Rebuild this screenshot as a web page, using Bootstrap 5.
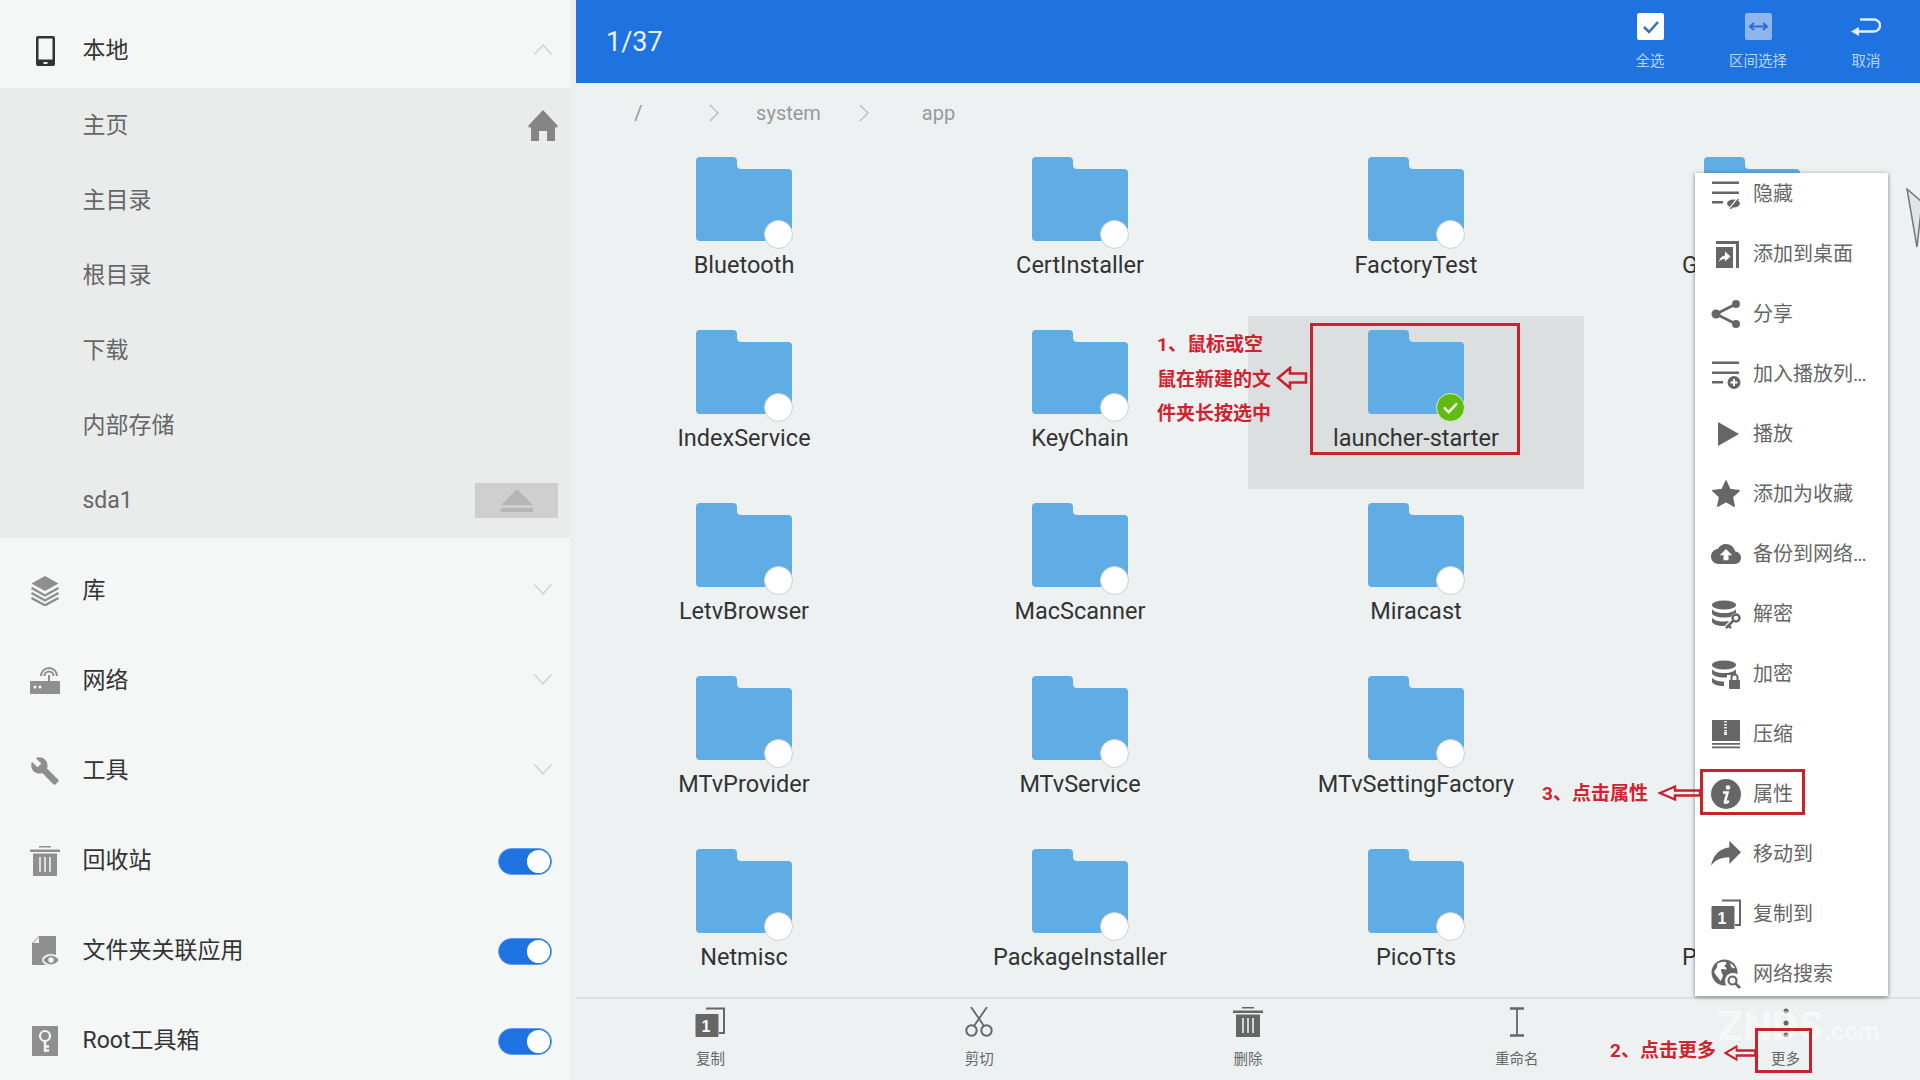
<!DOCTYPE html>
<html lang="zh">
<head>
<meta charset="utf-8">
<title>文件管理</title>
<link href="https://cdn.jsdelivr.net/npm/bootstrap@5.3.0/dist/css/bootstrap.min.css" rel="stylesheet">
<style>
html,body{margin:0;height:100%;overflow:hidden;}
body{font-family:Roboto,"Noto Sans CJK SC",sans-serif;background:#eef1f1;color:#333;}
.shell{width:1920px;height:1080px;overflow:hidden;}
.side{width:576px;flex:0 0 576px;background:#f5f7f7;border-right:6px solid #edf0f0;overflow:hidden;}
.side-row{flex:none;height:90px;padding:0 18px 0 30px;font-size:23px;color:#333;}
.side-row.first{height:88px;padding-top:14px;}
.side-row svg.ic{width:30px;height:30px;margin-right:22.500px;flex:none;color:#8f8f8f;}
.side-row.first svg.ic{color:#333;}
.side-gap{flex:none;height:8px;}
.sub-group{flex:none;background:#eaecec;width:570px;}
.sub-row{height:75px;padding:2px 12px 0 82.500px;font-size:23px;color:#666;}
.home-ic{width:30px;height:31px;color:#858585;margin-top:-2px;}
.eject-btn{width:83px;height:35px;background:#cfcfcf;margin-top:-2px;}
.chev{width:18px;height:11px;color:#cfd2d2;margin-bottom:4px;}
.form-switch .form-check-input.sw-toggle{width:54px;height:27px;margin:0;float:none;background-color:#1f73e0;border:1px solid #5f9ff0;
 background-image:url("data:image/svg+xml,%3csvg xmlns='http://www.w3.org/2000/svg' viewBox='-4 -4 8 8'%3e%3ccircle r='3.7' fill='%23fff'/%3e%3c/svg%3e");}
.main-pane{min-width:0;}
.top-bar{flex:none;height:83px;background:#1f73e0;color:#fff;}
.count{font-size:27px;padding:2px 0 0 30px;color:#e9f1fc;}
.top-act{width:108px;padding-top:13px;font-size:14.500px;line-height:20px;color:#b9d4f5;}
.top-act svg{height:27px;display:block;margin-bottom:12px;}
.crumbs{flex:none;height:60px;padding:0 0 1px 25px;font-size:20px;color:#999;}
.crumb-cell{width:75px;text-align:center;}
.crumb-cell svg{width:10px;height:18px;color:#bbb;display:block;margin:0 auto;}
.grid-area{overflow:hidden;min-height:0;}
.tile{height:173px;padding-top:14px;text-align:center;font-size:23.500px;line-height:28px;color:#333;}
.tile.picked{background:#dcdfdf;}
.folder{position:relative;width:96px;height:84px;margin:0 auto 10px;}
.folder>svg{display:block;width:96px;height:84px;color:#60ace5;}
.pick{position:absolute;left:68px;top:63px;width:29px;height:29px;border-radius:50%;background:#fff;border:1px solid #cfcfcf;}
.pick.on{background:#62bb14;border:1.500px solid #d6f0c0;}
.pick svg{display:block;width:100%;height:100%;}
.tile-name{white-space:nowrap;}
.tile-name.cut{text-align:left;padding-left:98px;}
.bottom-bar{flex:none;height:83px;border-top:2px solid #dde0e0;background:#eef1f1;}
.bot-act{padding-top:8px;font-size:14.500px;line-height:20px;color:#666;}
.bot-act svg{display:block;width:30px;height:30px;margin-bottom:13px;}
.ic-num{font-family:"Liberation Sans",sans-serif;font-size:16px;font-weight:700;text-anchor:middle;fill:#fff;}
.pop-menu{position:absolute;left:1695px;top:173px;width:193px;height:823px;background:#fff;overflow:hidden;box-shadow:0 1px 4px rgba(0,0,0,.5);font-size:20px;color:#666;}
.pop-inner{margin-top:-9.500px;}
.pop-item{height:60px;padding-left:16px;gap:12px;white-space:nowrap;}
.pop-item svg{width:30px;height:30px;flex:none;}
.tight{letter-spacing:-1px;}
.note{position:absolute;color:#cf2430;font-weight:700;font-size:19px;white-space:nowrap;line-height:1.2;}
.note-3l{left:1157px;top:328px;line-height:34.500px;}
.red-box{position:absolute;border:3px solid #c8232c;}
.red-arrow{position:absolute;color:#c8232c;}
.plane{position:absolute;left:1906px;top:188px;width:14px;height:60px;}
.wmark{position:absolute;left:1718px;top:1006px;color:rgba(255,255,255,.5);font-size:41px;font-weight:700;line-height:40px;white-space:nowrap;}
.wmark small{font-size:25px;}
.defs{position:absolute;width:0;height:0;}
</style>
</head>
<body>
<svg class="defs" aria-hidden="true">
 <symbol id="i-phone" viewBox="0 0 30 30"><path fill="currentColor" fill-rule="evenodd" d="M8 0h15a2 2 0 0 1 2 2v26a2 2 0 0 1-2 2H8a2 2 0 0 1-2-2V2a2 2 0 0 1 2-2Zm.5 2.500v21h14v-21Zm5 23.500v2h4v-2Z"/></symbol>
 <symbol id="i-layers" viewBox="0 0 30 30"><path fill="currentColor" d="M15 0 28.500 7.500 15 15 1.500 7.500Z"/><path fill="none" stroke="currentColor" stroke-width="2.400" d="M1.500 12 15 19.500 28.500 12M1.500 17 15 24.500 28.500 17M1.500 22 15 29.300 28.500 22"/></symbol>
 <symbol id="i-router" viewBox="0 0 30 30"><path fill="currentColor" d="M1 15h28a1 1 0 0 1 1 1v11a1 1 0 0 1-1 1H1a1 1 0 0 1-1-1V16a1 1 0 0 1 1-1Z"/><circle cx="5" cy="21" r="1.500" fill="#f5f7f7"/><circle cx="10" cy="21" r="1.500" fill="#f5f7f7"/><path fill="none" stroke="currentColor" stroke-width="2" d="M19 15V9M14.500 10a4.500 4.500 0 0 1 9 0M11 10a8 8 0 0 1 16 0"/></symbol>
 <symbol id="i-wrench" viewBox="0 0 24 24"><path fill="currentColor" d="M22.700 19l-9.100-9.100c.9-2.300.4-5-1.500-6.900-2-2-5-2.400-7.400-1.300L9 6 6 9 1.600 4.700C.4 7.100.9 10.100 2.900 12.100c1.900 1.900 4.600 2.400 6.900 1.500l9.100 9.100c.4.400 1 .4 1.400 0l2.300-2.300c.5-.4.5-1.100.1-1.400z"/></symbol>
 <symbol id="i-trash" viewBox="0 0 30 30"><path fill="currentColor" d="M9 0h12v1.500H9ZM0 3.500h30v2.500H0ZM3 7.500h24V29a1 1 0 0 1-1 1H4a1 1 0 0 1-1-1Z"/><path stroke="#f0f2f2" stroke-width="1.600" d="M10 11v15M15 11v15M20 11v15"/></symbol>
 <symbol id="i-fileeye" viewBox="0 0 30 30"><path fill="currentColor" d="M9 0h16a1 1 0 0 1 1 1v27a1 1 0 0 1-1 1H3a1 1 0 0 1-1-1V7Z"/><path fill="#f5f7f7" d="M9 1v6H3Z"/><ellipse cx="21" cy="24" rx="9" ry="6" fill="#f5f7f7"/><path fill="currentColor" fill-rule="evenodd" d="M21 19.500c3.500 0 6.300 2.200 7.500 4.500-1.200 2.300-4 4.500-7.500 4.500s-6.300-2.200-7.500-4.500c1.200-2.300 4-4.500 7.500-4.500Zm0 1.800a2.700 2.700 0 1 0 0 5.400 2.700 2.700 0 0 0 0-5.400Z"/></symbol>
 <symbol id="i-keybox" viewBox="0 0 30 30"><rect x="2" y="0" width="26" height="30" rx="1" fill="currentColor"/><circle cx="15" cy="10" r="5" fill="none" stroke="#f5f7f7" stroke-width="2.200"/><path fill="none" stroke="#f5f7f7" stroke-width="2.400" d="M15 15v11M15 20.500h4M15 24.500h4"/></symbol>
 <symbol id="i-folder" viewBox="0 0 96 84"><path fill="currentColor" d="M4 0H37a4 4 0 0 1 4 4v4a4 4 0 0 0 4 4H92a4 4 0 0 1 4 4V80a4 4 0 0 1-4 4H4a4 4 0 0 1-4-4V4a4 4 0 0 1 4-4Z"/></symbol>
 <symbol id="i-hide" viewBox="0 0 30 30"><path fill="currentColor" d="M1 2.500h27V5H1ZM1 12.500h27V15H1ZM1 22h11v2.500H1Z"/><ellipse cx="22.500" cy="24.500" rx="6.500" ry="4" fill="currentColor"/><path stroke="#fff" stroke-width="1.400" d="M18 30l8-10"/><path stroke="currentColor" stroke-width="1.300" d="M19 30.500l8.500-10.500"/></symbol>
 <symbol id="i-desk" viewBox="0 0 30 30"><path fill="currentColor" d="M5 2h23v27h-3V5H5ZM5 8h17v21H5Z"/><path fill="#fff" d="M14 12.500l5.500 5-5.500 5V20c-3 0-4.700 1-6 3 .4-3.500 2.300-6 6-6.600Z"/></symbol>
 <symbol id="i-share" viewBox="0 0 30 30"><path stroke="currentColor" stroke-width="2.600" fill="none" d="M25 5 5 15 25 25"/><circle cx="5" cy="15" r="4.500" fill="currentColor"/><circle cx="25" cy="5" r="4" fill="currentColor"/><circle cx="25" cy="25" r="4" fill="currentColor"/></symbol>
 <symbol id="i-plist" viewBox="0 0 30 30"><path fill="currentColor" d="M1 2.500h27V5H1ZM1 12.500h27V15H1ZM1 22h11v2.500H1Z"/><circle cx="23" cy="23.500" r="6.500" fill="currentColor"/><path stroke="#fff" stroke-width="2" d="M19.500 23.500h7M23 20v7"/></symbol>
 <symbol id="i-play" viewBox="0 0 30 30"><path fill="currentColor" d="M7 3 28 15 7 27Z"/></symbol>
 <symbol id="i-star" viewBox="0 0 30 30"><path fill="currentColor" stroke="currentColor" stroke-linejoin="round" stroke-width="1.500" d="M15 2l3.900 8.600 9.300 1.100-6.900 6.300 1.900 9.200-8.200-4.600-8.200 4.600 1.900-9.200-6.900-6.300 9.300-1.100Z"/></symbol>
 <symbol id="i-cloud" viewBox="0 0 24 24"><path fill="currentColor" d="M19.350 10.040C18.670 6.590 15.640 4 12 4 9.110 4 6.600 5.640 5.350 8.040 2.340 8.360 0 10.910 0 14c0 3.310 2.690 6 6 6h13c2.760 0 5-2.240 5-5 0-2.640-2.050-4.780-4.650-4.960zM14 13v4h-4v-4H7l5-5 5 5h-3z"/></symbol>
 <symbol id="i-dbkey" viewBox="0 0 30 30"><ellipse cx="13" cy="6" rx="12" ry="4.500" fill="currentColor"/><path fill="currentColor" d="M1 9.500c0 2.500 5.400 4.500 12 4.500s12-2 12-4.500v4.500c0 2.500-5.400 4.500-12 4.500S1 16.500 1 14ZM1 18c0 2.500 5.400 4.500 12 4.500 2 0 3.500-.2 5-.5l-3 5c-.7.100-1.300.1-2 .1-6.600 0-12-2-12-4.500Z"/><circle cx="25" cy="19" r="5" fill="#fff"/><circle cx="25" cy="19" r="3.500" fill="none" stroke="currentColor" stroke-width="2.500"/><path stroke="#fff" stroke-width="5" d="M22 22l-7 7"/><path stroke="currentColor" stroke-width="2.500" d="M22.500 21.500 15 29M18 27l2 2"/></symbol>
 <symbol id="i-dblock" viewBox="0 0 30 30"><ellipse cx="13" cy="6" rx="12" ry="4.500" fill="currentColor"/><path fill="currentColor" d="M1 9.500c0 2.500 5.400 4.500 12 4.500s12-2 12-4.500v4.500c0 2.500-5.400 4.500-12 4.500S1 16.500 1 14ZM1 18c0 2.500 5.400 4.500 12 4.500v4.500c-6.600 0-12-2-12-4.500Z"/><rect x="16" y="16" width="15" height="15" fill="#fff"/><rect x="18" y="21" width="11" height="9" rx="1" fill="currentColor"/><path fill="none" stroke="currentColor" stroke-width="2" d="M20.500 21v-2.500a3 3 0 0 1 6 0V21"/></symbol>
 <symbol id="i-zip" viewBox="0 0 30 30"><path fill="currentColor" d="M1 1h28v21H1ZM1 24h28v1.800H1ZM1 27.500h28v1.800H1Z"/><path stroke="#fff" stroke-width="2.600" stroke-dasharray="1.500 1.500" d="M14.500 2v11"/><rect x="13.200" y="13" width="2.600" height="3" fill="#fff"/></symbol>
 <symbol id="i-info" viewBox="0 0 30 30"><circle cx="15" cy="15" r="15" fill="currentColor"/><circle cx="17" cy="8.500" r="2.300" fill="#fff"/><path fill="none" stroke="#fff" stroke-width="2.600" d="M12 13.500h4.500L14 22.500q-.3 1.500 1 1.200l3-1.500"/></symbol>
 <symbol id="i-move" viewBox="3 4 18 18"><path fill="currentColor" d="M14 9V5l7 7-7 7v-4.100c-5 0-8.500 1.600-11 5.100 1-5 4-10 11-11z"/></symbol>
 <symbol id="i-copy" viewBox="0 0 30 30"><path fill="none" stroke="currentColor" stroke-width="2" d="M11 1.500h18V26h-5"/><rect x="0.500" y="7" width="23" height="23" rx="1" fill="currentColor"/></symbol>
 <symbol id="i-globe" viewBox="0 0 30 30"><circle cx="13.500" cy="13.500" r="13" fill="currentColor"/><path fill="#fff" d="M6 5c3-2 6-2.500 9-2 1 1.500 0 3-2 3.500 1 1.500 3 2 2.500 4-2 .5-3-1-5-.5C9 12 12 15 12 17c-1 1.500-1.500 4-2.500 5C8 19 4 16 3 12.500 5 10 7 8 6 5ZM19 4c2 1 4 3 5 5-1.500.5-3 0-4-1.500Z"/><circle cx="22" cy="22" r="8" fill="#fff"/><circle cx="21.500" cy="21.500" r="4" fill="none" stroke="currentColor" stroke-width="2.200"/><path stroke="currentColor" stroke-width="2.600" d="M24.500 24.500 29 29"/></symbol>
 <symbol id="i-cut" viewBox="0 0 30 30"><circle cx="7.500" cy="23.500" r="5.200" fill="none" stroke="currentColor" stroke-width="2"/><circle cx="22.500" cy="23.500" r="5.200" fill="none" stroke="currentColor" stroke-width="2"/><path fill="none" stroke="currentColor" stroke-width="1.800" d="M10 19 23 0M20 19 7 0"/></symbol>
 <symbol id="i-beam" viewBox="0 0 30 30"><path fill="none" stroke="currentColor" stroke-width="2.600" d="M8 1.500h14M8 28.500h14"/><path stroke="currentColor" stroke-width="1.800" d="M15 1.500v27"/></symbol>
 <symbol id="i-more" viewBox="0 0 30 30"><circle cx="15" cy="4" r="2.500" fill="currentColor"/><circle cx="15" cy="16" r="2.500" fill="currentColor"/><circle cx="15" cy="28" r="2.500" fill="currentColor"/></symbol>
 <symbol id="i-up" viewBox="0 0 18 11"><path fill="none" stroke="currentColor" stroke-width="1.300" d="M.5 10.500 9 1l8.500 9.500"/></symbol>
 <symbol id="i-down" viewBox="0 0 18 11"><path fill="none" stroke="currentColor" stroke-width="1.300" d="M.5.500 9 10l8.500-9.500"/></symbol>
 <symbol id="i-next" viewBox="0 0 10 18"><path fill="none" stroke="currentColor" stroke-width="1.300" d="M1 1l8 8-8 8"/></symbol>
 <symbol id="i-lfat" viewBox="0 0 32 24"><path fill="none" stroke="currentColor" stroke-width="2.600" d="M2 12 14 2v5.500h16v9H14V22Z"/></symbol>
 <symbol id="i-lthin" viewBox="0 0 42 18" preserveAspectRatio="none"><path fill="none" stroke="currentColor" stroke-width="2.400" d="M2 9 17 2.500V6.500H42V11.500H17V15.500Z"/></symbol>
</svg>

<div class="shell d-flex position-relative">
 <aside class="side d-flex flex-column">
  <div class="side-row first d-flex align-items-center"><svg class="ic"><use href="#i-phone"/></svg><span class="flex-grow-1">本地</span><svg class="chev"><use href="#i-up"/></svg></div>
  <div class="sub-group">
   <div class="sub-row d-flex align-items-center justify-content-between"><span>主页</span><svg class="home-ic" viewBox="0 0 30 31"><path fill="currentColor" d="M15 0 30 16l-1 1.500h-2V31h-8V21h-8v10H3V17.500H1L0 16Z"/></svg></div>
   <div class="sub-row d-flex align-items-center"><span>主目录</span></div>
   <div class="sub-row d-flex align-items-center"><span>根目录</span></div>
   <div class="sub-row d-flex align-items-center"><span>下载</span></div>
   <div class="sub-row d-flex align-items-center"><span>内部存储</span></div>
   <div class="sub-row d-flex align-items-center justify-content-between"><span>sda1</span><span class="eject-btn d-flex align-items-center justify-content-center"><svg width="32" height="25" viewBox="0 0 32 25"><path fill="#b6b6b6" d="M16 1 32 17H0ZM0 20h32v4H0Z"/></svg></span></div>
  </div>
  <div class="side-gap"></div>
  <div class="side-row d-flex align-items-center"><svg class="ic"><use href="#i-layers"/></svg><span class="flex-grow-1">库</span><svg class="chev"><use href="#i-down"/></svg></div>
  <div class="side-row d-flex align-items-center"><svg class="ic"><use href="#i-router"/></svg><span class="flex-grow-1">网络</span><svg class="chev"><use href="#i-down"/></svg></div>
  <div class="side-row d-flex align-items-center"><svg class="ic"><use href="#i-wrench"/></svg><span class="flex-grow-1">工具</span><svg class="chev"><use href="#i-down"/></svg></div>
  <div class="side-row d-flex align-items-center"><svg class="ic"><use href="#i-trash"/></svg><span class="flex-grow-1">回收站</span><div class="form-check form-switch d-flex m-0 p-0"><input class="form-check-input sw-toggle" type="checkbox" checked aria-label="回收站"></div></div>
  <div class="side-row d-flex align-items-center"><svg class="ic"><use href="#i-fileeye"/></svg><span class="flex-grow-1">文件夹关联应用</span><div class="form-check form-switch d-flex m-0 p-0"><input class="form-check-input sw-toggle" type="checkbox" checked aria-label="文件夹关联应用"></div></div>
  <div class="side-row d-flex align-items-center"><svg class="ic"><use href="#i-keybox"/></svg><span class="flex-grow-1">Root工具箱</span><div class="form-check form-switch d-flex m-0 p-0"><input class="form-check-input sw-toggle" type="checkbox" checked aria-label="Root工具箱"></div></div>
 </aside>

 <main class="main-pane flex-grow-1 d-flex flex-column">
  <header class="top-bar d-flex align-items-start justify-content-between">
   <div class="count align-self-center">1/37</div>
   <div class="d-flex">
    <div class="top-act d-flex flex-column align-items-center"><svg width="27" viewBox="0 0 27 27"><rect width="27" height="27" rx="2" fill="#fff"/><path fill="none" stroke="#3a6db3" stroke-width="2.500" d="M7 14l5 5 9-10"/></svg><span>全选</span></div>
    <div class="top-act d-flex flex-column align-items-center"><svg width="27" viewBox="0 0 27 27"><rect width="27" height="27" rx="2" fill="#8fb5ee"/><path fill="none" stroke="#2a6fd1" stroke-width="2" d="M5 13.500h17M9 10l-4 3.500L9 17M18 10l4 3.500L18 17"/></svg><span>区间选择</span></div>
    <div class="top-act d-flex flex-column align-items-center"><svg width="30" viewBox="0 0 30 27"><path fill="none" stroke="#e3eefc" stroke-width="2.400" d="M9 6.500h14a6 6 0 0 1 0 12H7"/><path fill="#e3eefc" d="M0 18.500 8 14v9Z"/></svg><span>取消</span></div>
   </div>
  </header>

  <nav class="crumbs d-flex align-items-center">
   <span class="crumb-cell">/</span>
   <span class="crumb-cell"><svg><use href="#i-next"/></svg></span>
   <span class="crumb-cell">system</span>
   <span class="crumb-cell"><svg><use href="#i-next"/></svg></span>
   <span class="crumb-cell">app</span>
  </nav>

  <section class="grid-area flex-grow-1">
   <div class="row g-0 row-cols-4">
    <div class="col tile"><div class="folder"><svg><use href="#i-folder"/></svg><span class="pick"></span></div><div class="tile-name">Bluetooth</div></div>
    <div class="col tile"><div class="folder"><svg><use href="#i-folder"/></svg><span class="pick"></span></div><div class="tile-name">CertInstaller</div></div>
    <div class="col tile"><div class="folder"><svg><use href="#i-folder"/></svg><span class="pick"></span></div><div class="tile-name">FactoryTest</div></div>
    <div class="col tile"><div class="folder"><svg><use href="#i-folder"/></svg><span class="pick"></span></div><div class="tile-name cut">G</div></div>

    <div class="col tile"><div class="folder"><svg><use href="#i-folder"/></svg><span class="pick"></span></div><div class="tile-name">IndexService</div></div>
    <div class="col tile"><div class="folder"><svg><use href="#i-folder"/></svg><span class="pick"></span></div><div class="tile-name">KeyChain</div></div>
    <div class="col tile picked"><div class="folder"><svg><use href="#i-folder"/></svg><span class="pick on"><svg viewBox="0 0 29 29"><path fill="none" stroke="#eef9e2" stroke-width="2.600" d="M7.500 14.500l5 5 9-9.500"/></svg></span></div><div class="tile-name">launcher-starter</div></div>
    <div class="col tile"><div class="folder"><svg><use href="#i-folder"/></svg><span class="pick"></span></div></div>

    <div class="col tile"><div class="folder"><svg><use href="#i-folder"/></svg><span class="pick"></span></div><div class="tile-name">LetvBrowser</div></div>
    <div class="col tile"><div class="folder"><svg><use href="#i-folder"/></svg><span class="pick"></span></div><div class="tile-name">MacScanner</div></div>
    <div class="col tile"><div class="folder"><svg><use href="#i-folder"/></svg><span class="pick"></span></div><div class="tile-name">Miracast</div></div>
    <div class="col tile"><div class="folder"><svg><use href="#i-folder"/></svg><span class="pick"></span></div></div>

    <div class="col tile"><div class="folder"><svg><use href="#i-folder"/></svg><span class="pick"></span></div><div class="tile-name">MTvProvider</div></div>
    <div class="col tile"><div class="folder"><svg><use href="#i-folder"/></svg><span class="pick"></span></div><div class="tile-name">MTvService</div></div>
    <div class="col tile"><div class="folder"><svg><use href="#i-folder"/></svg><span class="pick"></span></div><div class="tile-name">MTvSettingFactory</div></div>
    <div class="col tile"><div class="folder"><svg><use href="#i-folder"/></svg><span class="pick"></span></div></div>

    <div class="col tile"><div class="folder"><svg><use href="#i-folder"/></svg><span class="pick"></span></div><div class="tile-name">Netmisc</div></div>
    <div class="col tile"><div class="folder"><svg><use href="#i-folder"/></svg><span class="pick"></span></div><div class="tile-name">PackageInstaller</div></div>
    <div class="col tile"><div class="folder"><svg><use href="#i-folder"/></svg><span class="pick"></span></div><div class="tile-name">PicoTts</div></div>
    <div class="col tile"><div class="folder"><svg><use href="#i-folder"/></svg><span class="pick"></span></div><div class="tile-name cut">P</div></div>
   </div>
  </section>

  <footer class="bottom-bar d-flex">
   <div class="bot-act flex-fill w-100 d-flex flex-column align-items-center"><svg><use href="#i-copy"/><text class="ic-num" x="11" y="25">1</text></svg><span>复制</span></div>
   <div class="bot-act flex-fill w-100 d-flex flex-column align-items-center"><svg><use href="#i-cut"/></svg><span>剪切</span></div>
   <div class="bot-act flex-fill w-100 d-flex flex-column align-items-center"><svg><use href="#i-trash"/></svg><span>删除</span></div>
   <div class="bot-act flex-fill w-100 d-flex flex-column align-items-center"><svg><use href="#i-beam"/></svg><span>重命名</span></div>
   <div class="bot-act flex-fill w-100 d-flex flex-column align-items-center"><svg><use href="#i-more"/></svg><span>更多</span></div>
  </footer>
 </main>

 <div class="wmark">ZNDS<small>.com</small></div>

 <div class="pop-menu">
  <div class="pop-inner">
   <div class="pop-item d-flex align-items-center"><svg><use href="#i-hide"/></svg><span>隐藏</span></div>
   <div class="pop-item d-flex align-items-center"><svg><use href="#i-desk"/></svg><span>添加到桌面</span></div>
   <div class="pop-item d-flex align-items-center"><svg><use href="#i-share"/></svg><span>分享</span></div>
   <div class="pop-item d-flex align-items-center"><svg><use href="#i-plist"/></svg><span>加入播放列<span class="tight">...</span></span></div>
   <div class="pop-item d-flex align-items-center"><svg><use href="#i-play"/></svg><span>播放</span></div>
   <div class="pop-item d-flex align-items-center"><svg><use href="#i-star"/></svg><span>添加为收藏</span></div>
   <div class="pop-item d-flex align-items-center"><svg><use href="#i-cloud"/></svg><span>备份到网络<span class="tight">...</span></span></div>
   <div class="pop-item d-flex align-items-center"><svg><use href="#i-dbkey"/></svg><span>解密</span></div>
   <div class="pop-item d-flex align-items-center"><svg><use href="#i-dblock"/></svg><span>加密</span></div>
   <div class="pop-item d-flex align-items-center"><svg><use href="#i-zip"/></svg><span>压缩</span></div>
   <div class="pop-item d-flex align-items-center"><svg><use href="#i-info"/></svg><span>属性</span></div>
   <div class="pop-item d-flex align-items-center"><svg><use href="#i-move"/></svg><span>移动到</span></div>
   <div class="pop-item d-flex align-items-center"><svg><use href="#i-copy"/><text class="ic-num" x="11" y="25">1</text></svg><span>复制到</span></div>
   <div class="pop-item d-flex align-items-center"><svg><use href="#i-globe"/></svg><span>网络搜索</span></div>
  </div>
 </div>

 <svg class="plane" viewBox="0 0 14 60"><path fill="#dfe5ea" stroke="#777" stroke-width="1.500" d="M1 1 16 14 11 59Z"/></svg>

 <div class="note note-3l">1、鼠标或空<br>鼠在新建的文<br>件夹长按选中</div>
 <svg class="red-arrow" style="left:1276px;top:366px" width="32" height="24"><use href="#i-lfat"/></svg>
 <div class="red-box" style="left:1310px;top:323px;width:210px;height:132px"></div>

 <div class="note" style="left:1542px;top:783px">3、点击属性</div>
 <svg class="red-arrow" style="left:1658px;top:784px" width="42" height="18"><use href="#i-lthin"/></svg>
 <div class="red-box" style="left:1700px;top:769px;width:105px;height:46px"></div>

 <div class="note" style="left:1610px;top:1040px">2、点击更多</div>
 <svg class="red-arrow" style="left:1724px;top:1044px" width="31" height="18"><use href="#i-lthin"/></svg>
 <div class="red-box" style="left:1755px;top:1028px;width:57px;height:45px"></div>
</div>
<script src="https://cdn.jsdelivr.net/npm/bootstrap@5.3.0/dist/js/bootstrap.bundle.min.js"></script>
</body>
</html>
